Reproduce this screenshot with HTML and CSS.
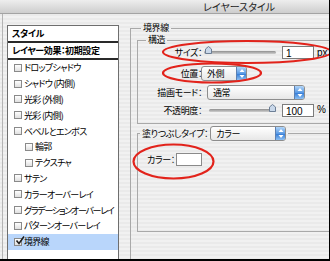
FILE: index.html
```html
<!DOCTYPE html>
<html lang="ja">
<head>
    <meta charset="UTF-8">
    <title>レイヤースタイル</title>
    <link rel="stylesheet" href="styles.css">
</head>
<body>
    <div class="window">
        <div class="titlebar"><span class="title">レイヤースタイル</span></div>

        <div class="main">
            <div class="stylelist">
                <div class="list-head">スタイル</div>
                <div class="list-preset">レイヤー効果：初期設定</div>
                <ul class="effects">
                    <li><span class="check"></span>ドロップシャドウ</li>
                    <li><span class="check"></span>シャドウ (内側)</li>
                    <li><span class="check"></span>光彩 (外側)</li>
                    <li><span class="check"></span>光彩 (内側)</li>
                    <li><span class="check"></span>ベベルとエンボス</li>
                    <li class="sub"><span class="check"></span>輪郭</li>
                    <li class="sub"><span class="check"></span>テクスチャ</li>
                    <li><span class="check"></span>サテン</li>
                    <li><span class="check"></span>カラーオーバーレイ</li>
                    <li class="long"><span class="check"></span>グラデーションオーバーレイ</li>
                    <li><span class="check"></span>パターンオーバーレイ</li>
                    <li class="selected">
                        <span class="check">
                            <svg width="10" height="10" viewBox="0 0 10 10"><path d="M1.5 4.5 L4 7.5 L9 0.5" fill="none" stroke="#1d1d1d" stroke-width="1.6"/></svg>
                        </span>境界線
                    </li>
                </ul>
            </div>

            <div class="panel">
                <fieldset class="group outer">
                    <legend>境界線</legend>

                    <fieldset class="group structure">
                        <legend>構造</legend>

                        <div class="row row-size">
                            <span class="lbl">サイズ：</span>
                            <div class="slider size-slider">
                                <span class="thumb thumb-left">
                                    <svg width="7" height="8" viewBox="0 0 7 8"><path d="M0.5 3 L3.5 0.5 L6.5 3 L6.5 7.5 L0.5 7.5 Z" fill="#c9d8ea" stroke="#6d7f96"/></svg>
                                </span>
                            </div>
                            <span class="field">1</span>
                            <span class="unit">px</span>
                        </div>

                        <div class="row row-pos">
                            <span class="lbl">位置：</span>
                            <div class="popup pos-popup">外側
                                <span class="stepper"><svg width="6" height="11" viewBox="0 0 6 11"><path d="M3 1 L5.5 4 L0.5 4 Z M3 10 L5.5 7 L0.5 7 Z" fill="#fff"/></svg></span>
                            </div>
                        </div>

                        <div class="row row-mode">
                            <span class="lbl">描画モード：</span>
                            <div class="popup mode-popup">通常
                                <span class="stepper"><svg width="6" height="11" viewBox="0 0 6 11"><path d="M3 1 L5.5 4 L0.5 4 Z M3 10 L5.5 7 L0.5 7 Z" fill="#fff"/></svg></span>
                            </div>
                        </div>

                        <div class="row row-opacity">
                            <span class="lbl">不透明度：</span>
                            <div class="slider opacity-slider">
                                <span class="thumb thumb-right">
                                    <svg width="7" height="8" viewBox="0 0 7 8"><path d="M0.5 3 L3.5 0.5 L6.5 3 L6.5 7.5 L0.5 7.5 Z" fill="#c9d8ea" stroke="#6d7f96"/></svg>
                                </span>
                            </div>
                            <span class="field">100</span>
                            <span class="unit">%</span>
                        </div>
                    </fieldset>

                    <fieldset class="group fill">
                        <legend>
                            <span class="fill-lbl">塗りつぶしタイプ：</span>
                            <span class="popup fill-popup">カラー
                                <span class="stepper"><svg width="6" height="11" viewBox="0 0 6 11"><path d="M3 1 L5.5 4 L0.5 4 Z M3 10 L5.5 7 L0.5 7 Z" fill="#fff"/></svg></span>
                            </span>
                        </legend>

                        <div class="row row-color">
                            <span class="color-lbl">カラー：</span>
                            <span class="swatch"></span>
                        </div>
                    </fieldset>
                </fieldset>
            </div>
        </div>

        <!-- 赤丸の注釈 -->
        <svg class="marks" width="330" height="261" viewBox="0 0 330 261">
            <ellipse cx="247" cy="52" rx="84" ry="11"/>
            <ellipse cx="212" cy="73" rx="49" ry="9.5"/>
            <ellipse cx="173.5" cy="161.5" rx="40" ry="17"/>
        </svg>
    </div>
</body>
</html>
```

FILE: styles.css
```css
* {
    box-sizing: border-box;
}
body {
    margin: 0;
    background-color: #000;
    font-family: "Noto Sans CJK JP", sans-serif;
}
.window {
    position: relative;
    width: 329px;
    height: 259px;
    overflow: hidden;
    display: flex;
    flex-direction: column;
    font-size: 9px;
    font-feature-settings: "palt";
    letter-spacing: -0.4px;
    line-height: 1;
    white-space: nowrap;
    color: #000;
    background: repeating-linear-gradient(to bottom, #f1f1f1 0 2px, #eaeaea 2px 4px);
}
.titlebar {
    flex: none;
    height: 14px;
    display: flex;
    justify-content: flex-end;
    align-items: center;
    padding-right: 54px;
    background: linear-gradient(#eeeeee, #cdcdcd);
    border-bottom: 1px solid #a3a3a3;
}
.title {
    font-size: 10px;
    letter-spacing: 0;
    color: #222;
}
.main {
    flex: 1;
    display: flex;
    margin-left: 2px;
    border-left: 1px solid #b4b4b4;
    padding: 11px 0 0 4px;
}

/* 左のスタイル一覧 */
.stylelist {
    flex: none;
    width: 112px;
    overflow: hidden;
    background-color: #fff;
    border: 1px solid #6e6e6e;
    border-bottom: none;
}
.list-head {
    height: 17px;
    line-height: 15px;
    padding-left: 4px;
    font-weight: 700;
    border-bottom: 2px solid #2a2a2a;
}
.list-preset {
    height: 17px;
    line-height: 15px;
    padding-left: 4px;
    font-weight: 700;
    border-bottom: 2px solid #2a2a2a;
}
.effects {
    list-style: none;
    margin: 0;
    padding: 0;
    letter-spacing: -0.7px;
}
.effects li {
    height: 15.8px;
    display: flex;
    align-items: center;
    padding-left: 6px;
}
.effects li.sub {
    padding-left: 17px;
}
.effects li.long {
    letter-spacing: -1.3px;
}
.effects li.selected {
    background-color: #b9d6fb;
}
.check {
    position: relative;
    flex: none;
    width: 8px;
    height: 8px;
    margin-right: 2px;
    border: 1px solid #8a8a8a;
    background: linear-gradient(#fff, #e0e0e0);
}
.check svg {
    position: absolute;
    left: 0;
    top: -3px;
}

/* 右のパネル */
.panel {
    flex: 1;
    margin-left: 11px;
    margin-top: -3px;
}
.group {
    margin: 0;
    padding: 0;
    min-width: 0;
    border: 1px solid #a9a9a9;
    border-right: none;
}
.group legend {
    height: 12px;
    line-height: 12px;
    padding: 0 2px;
}
.outer {
    border-bottom: none;
    padding-left: 6px;
    height: 300px;
}
.outer > legend {
    margin-left: 4px;
}
.structure {
    padding-bottom: 6px;
}
.structure > legend {
    margin-left: 8px;
}
.row {
    display: flex;
    align-items: center;
}
.lbl {
    flex: none;
    width: 64px;
    text-align: right;
}
.row-size {
    height: 13px;
}
.row-pos {
    height: 15px;
    margin-top: 7px;
}
.row-mode {
    height: 15px;
    margin-top: 4px;
}
.row-opacity {
    height: 14px;
    margin-top: 3px;
}

.slider {
    position: relative;
    height: 3px;
    border-radius: 2px;
    background: linear-gradient(#8e8e8e, #cfcfcf);
}
.size-slider {
    width: 72px;
    margin-left: 2px;
}
.opacity-slider {
    width: 67px;
    margin-left: 7px;
}
.thumb {
    position: absolute;
    top: -5px;
    line-height: 0;
}
.thumb-left {
    left: 1px;
}
.thumb-right {
    right: 0;
}
.field {
    width: 32px;
    height: 13px;
    margin-left: 6px;
    padding: 1px 0 0 3px;
    border: 1px solid #7c7c7c;
    background-color: #fff;
    font-family: "Liberation Sans", sans-serif;
    font-size: 10px;
    letter-spacing: 0;
    line-height: 11px;
}
.unit {
    margin-left: 3px;
    font-family: "Liberation Sans", sans-serif;
    font-size: 10px;
    letter-spacing: 0;
}

.popup {
    display: flex;
    align-items: center;
    height: 15px;
    padding-left: 5px;
    border: 1px solid #8d8d8d;
    border-radius: 3px;
    background: linear-gradient(#ffffff, #e7e7e7);
}
.stepper {
    display: flex;
    align-items: center;
    justify-content: center;
    width: 10px;
    height: 100%;
    margin-left: auto;
    border-left: 1px solid #5b80b2;
    border-radius: 0 2px 2px 0;
    background: linear-gradient(#b1d5f9, #5a9ae4 50%, #2f77d4 51%, #8cc0f3);
}
.pos-popup {
    width: 46px;
    margin-left: -1px;
}
.mode-popup {
    width: 98px;
    margin-left: 5px;
}

.fill {
    margin-top: 2px;
    padding-bottom: 65px;
}
.fill > legend {
    display: flex;
    align-items: center;
    height: 15px;
    margin-left: 2px;
}
.fill-lbl {
    margin-right: 2px;
}
.fill-popup {
    width: 76px;
}
.row-color {
    height: 13px;
    margin-top: 12px;
    padding-left: 9px;
}
.color-lbl {
    margin-right: 1px;
}
.swatch {
    width: 26px;
    height: 13px;
    border: 1px solid #8a8a8a;
    background-color: #fff;
}

.marks {
    position: absolute;
    left: 0;
    top: 0;
    pointer-events: none;
}
.marks ellipse {
    fill: none;
    stroke: #e2231b;
    stroke-width: 2.2;
}
```
